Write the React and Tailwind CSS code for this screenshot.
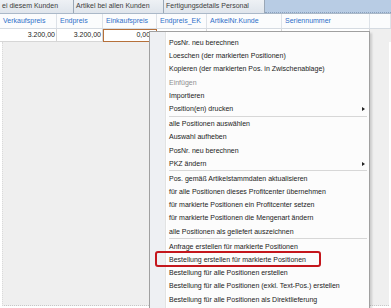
const tabs = [
  { label: "ei diesem Kunden", w: "w-[74px]" },
  { label: "Artikel bei allen Kunden", w: "w-[90px]" },
  { label: "Fertigungsdetails Personal", w: "w-[101px]" },
];

const columns = [
  { label: "Verkaufspreis", w: "w-[57px]" },
  { label: "Endpreis", w: "w-[46px]" },
  { label: "Einkaufspreis", w: "w-[54px]" },
  { label: "Endpreis_EK", w: "w-[50px]" },
  { label: "ArtikelNr.Kunde", w: "w-[75px]" },
  { label: "Seriennummer", w: "w-[88px]" },
];

const menu = [
  ["PosNr. neu berechnen"],
  ["Loeschen (der markierten Positionen)"],
  ["Kopieren (der markierten Pos. in Zwischenablage)"],
  ["Einfügen", "disabled"],
  ["Importieren"],
  ["Position(en) drucken", "sub"],
  "sep",
  ["alle Positionen auswählen"],
  ["Auswahl aufheben"],
  ["PosNr. neu berechnen"],
  ["PKZ ändern", "sub"],
  "sep",
  ["Pos. gemäß Artikelstammdaten aktualisieren"],
  ["für alle Positionen dieses Profitcenter übernehmen"],
  ["für markierte Positionen ein Profitcenter setzen"],
  ["für markierte Positionen die Mengenart ändern"],
  ["alle Positionen als geliefert auszeichnen"],
  "sep",
  ["Anfrage erstellen für markierte Positionen"],
  ["Bestellung erstellen für markierte Positionen", "marked"],
  ["Bestellung für alle Positionen erstellen"],
  ["Bestellung für alle Positionen (exkl. Text-Pos.) erstellen"],
  ["Bestellung für alle Positionen als Direktlieferung"],
];

const ContextMenu = () => (
  <div className="absolute left-[149px] top-[31px] w-[221px] h-[280px] bg-[#fcfcfc] border border-[#a0a0a0] pt-[4px] shadow-[2px_2px_2px_rgba(0,0,0,0.15)]">
    {/* icon gutter */}
    <div className="absolute left-0 top-0 bottom-0 w-[16px] bg-[#eef0f3] border-r border-[#e2e3e3]" />
    <div className="absolute left-[16px] top-0 bottom-0 w-px bg-white" />
    {menu.map((item, idx) =>
      item === "sep" ? (
        <div key={idx} className="relative h-[2px] ml-[19px] mr-[2px] flex flex-col justify-center">
          <div className="h-px bg-[#d7d7d7]" />
        </div>
      ) : (
        <div
          key={idx}
          className={`relative h-[13.2px] leading-[13.2px] pl-[19px] whitespace-nowrap ${
            item[1] === "disabled" ? "text-[#8f8f8f]" : "text-[#1b1b1b]"
          }`}
        >
          {item[0]}
          {item[1] === "sub" && (
            <span className="absolute right-[4px] top-[5px] w-0 h-0 border-y-[2px] border-y-transparent border-l-[3px] border-l-[#222]" />
          )}
          {item[1] === "marked" && (
            <span className="absolute left-[5px] top-[-2px] w-[166px] h-[16px] rounded-[3px] border-[2.5px] border-[#c4161c]" />
          )}
        </div>
      )
    )}
  </div>
);

const App = () => {
  return (
    <div className="relative w-[391px] h-[308px] overflow-hidden bg-white font-['Liberation_Sans',Arial,sans-serif] text-[7px]">
      <div className="flex h-[14px] border-b border-[#aab8c8]">
        {tabs.map((t) => (
          <div
            key={t.label}
            className={`${t.w} shrink-0 flex items-center pl-[2px] text-[#3d3d3d] bg-gradient-to-b from-[#eef1f5] to-[#dfe5ec] border-r border-[#9aa7b6] whitespace-nowrap overflow-hidden`}
          >
            {t.label}
          </div>
        ))}
        <div className="flex-1 bg-[#b8cce4] border-b border-dotted border-[#8aa1bd]" />
      </div>

      <div className="flex h-[15px] bg-[#fbfcfd] border-b border-[#d5dbe2]">
        {columns.map((c) => (
          <div key={c.label} className={`${c.w} shrink-0 flex items-center pl-[3px] text-[#2f6fc9] border-r border-[#dde2e8] whitespace-nowrap`}>
            {c.label}
          </div>
        ))}
        <div className="flex-1 border-r border-[#dde2e8]" />
      </div>

      <div className="flex h-[13px] bg-white text-[#222]">
        <div className="w-[57px] shrink-0 flex items-center justify-end pr-[1px] border-r border-b border-[#d6d6d6]">3.200,00</div>
        <div className="w-[46px] shrink-0 flex items-center justify-end pr-[1px] border-r border-b border-[#d6d6d6]">3.200,00</div>
        <div className="w-[54px] shrink-0 flex items-center justify-end pr-[2px] border border-[#b5703a]">0,000</div>
        <div className="w-[50px] shrink-0 flex items-center justify-end pr-[1px] border-r border-b border-[#d6d6d6]">0,00</div>
        <div className="w-[75px] shrink-0 border-r border-b border-[#d6d6d6]" />
        <div className="w-[88px] shrink-0 border-r border-b border-[#d6d6d6]" />
        <div className="flex-1 bg-[#efefef]" />
      </div>

      <div className="h-[264px] mx-[2px] bg-[#efefef] border-l border-[#dadada] border-b border-dotted border-b-[#c8c8c8]" />

      <ContextMenu />
    </div>
  );
};

export default App;
